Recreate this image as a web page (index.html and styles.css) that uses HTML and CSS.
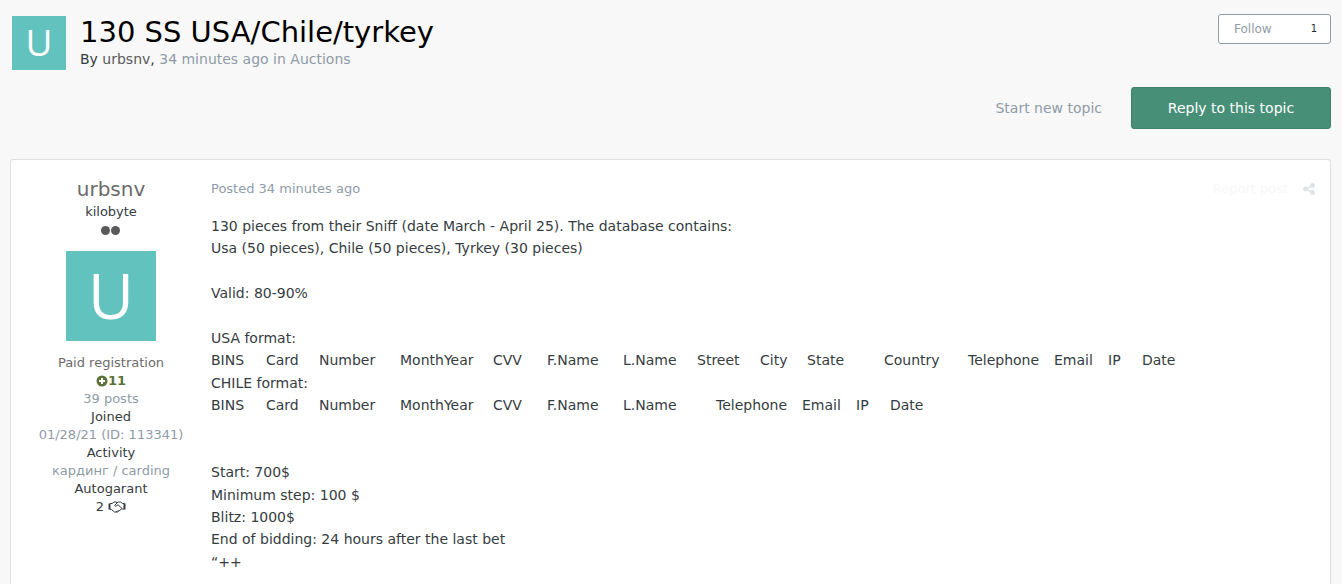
FILE: index.html
```
<!DOCTYPE html>
<html lang="en">
<head>
    <meta charset="utf-8">
    <title>130 SS USA/Chile/tyrkey</title>
    <link rel="stylesheet" href="styles.css">
</head>
<body>
    <header class="topic-header">
        <a class="avatar avatar-small" href="#">U</a>
        <div class="topic-info">
            <h1>130 SS USA/Chile/tyrkey</h1>
            <p>By <a class="dark" href="#">urbsnv</a>, <span class="light">34 minutes ago in <a href="#">Auctions</a></span></p>
        </div>
        <div class="follow">
            <a href="#">Follow</a>
            <a class="follow-count" href="#">1</a>
        </div>
    </header>

    <div class="toolbar">
        <a class="new-topic" href="#">Start new topic</a>
        <button class="reply" type="button">Reply to this topic</button>
    </div>

    <article class="post">
        <aside class="author">
            <h3><a class="name" href="#">urbsnv</a></h3>
            <ul>
                <li>kilobyte</li>
                <li class="pips"><span></span><span></span></li>
                <li class="photo"><a class="avatar avatar-large" href="#">U</a></li>
                <li class="group">Paid registration</li>
                <li class="reputation">
                    <svg width="12" height="12" viewBox="0 0 12 12"><circle cx="6" cy="6" r="5.5" fill="#5a7338"/><path d="M6 3v6M3 6h6" stroke="#fff" stroke-width="2"/></svg>11
                </li>
                <li class="light">39 posts</li>
                <li>Joined</li>
                <li class="light">01/28/21 (ID: 113341)</li>
                <li>Activity</li>
                <li class="light">кардинг / carding</li>
                <li>Autogarant</li>
                <li>2
                    <svg width="18" height="12" viewBox="0 0 18 12" fill="none" stroke="#353c41">
                        <path d="M1.500 2.500v6M16.500 2.500v6" stroke-width="2"/>
                        <path d="M2 2.500h2l2-1.500h2l1 .7L10.500 1h2l2 1.500h2M2 8.500h1.500l3 2.500h3l4-3h2.500M9 2L6.500 4.500q1 1.500 2.500 0l1-.8 4 3.800M8 11l1.500-1M10 10.500l1.500-1.500"/>
                    </svg>
                </li>
            </ul>
        </aside>

        <div class="content">
            <div class="meta">
                <a href="#">Posted 34 minutes ago</a>
                <div class="controls">
                    <a class="report" href="#">Report post</a>
                    <a href="#" aria-label="Share">
                        <svg width="12" height="12" viewBox="0 0 12 12" fill="#dfe2e5" stroke="#dfe2e5"><path d="M9.500 2.500L2.500 6l7 3.500" fill="none" stroke-width="1.500"/><circle cx="9.500" cy="2.500" r="2"/><circle cx="2.500" cy="6" r="2"/><circle cx="9.500" cy="9.500" r="2"/></svg>
                    </a>
                </div>
            </div>
            <div class="text">
                <p>130 pieces from their Sniff (date March - April 25). The database contains:<br>
                Usa (50 pieces), Chile (50 pieces), Tyrkey (30 pieces)</p>
                <p>Valid: 80-90%</p>
                <div>USA format:</div>
                <div class="fields fields-usa">
                    <span>BINS</span><span>Card</span><span>Number</span><span>MonthYear</span><span>CVV</span>
                    <span>F.Name</span><span>L.Name</span><span>Street</span><span>City</span><span>State</span>
                    <span>Country</span><span>Telephone</span><span>Email</span><span>IP</span><span>Date</span>
                </div>
                <div>CHILE format:</div>
                <div class="fields fields-chile">
                    <span>BINS</span><span>Card</span><span>Number</span><span>MonthYear</span><span>CVV</span>
                    <span>F.Name</span><span>L.Name</span><span>Telephone</span><span>Email</span><span>IP</span><span>Date</span>
                </div>
                <p class="terms">Start: 700$<br>
                Minimum step: 100 $<br>
                Blitz: 1000$<br>
                End of bidding: 24 hours after the last bet<br>
                “++</p>
            </div>
        </div>
    </article>
</body>
</html>
```
FILE: styles.css
```
* {
    box-sizing: border-box;
}
body {
    display: flex;
    flex-direction: column;
    margin: 0;
    padding: 14px 11px 0 10px;
    min-height: 100vh;
    background: #f8f8f8;
    color: #353c41;
    font-family: Verdana, "DejaVu Sans", sans-serif;
    font-size: 14px;
    line-height: 18px;
}
h1, h3, p, ul {
    margin: 0;
    padding: 0;
    font-weight: normal;
}
ul {
    list-style: none;
}
a {
    color: inherit;
    text-decoration: none;
}
svg {
    vertical-align: -2px;
}
.light {
    color: #8f9ba7;
}
.dark {
    color: #5a5a5a;
}

/* header */
.topic-header {
    display: flex;
    align-items: flex-start;
}
.avatar {
    display: flex;
    align-items: center;
    justify-content: center;
    padding-bottom: 2px;
    background: #62c2bd;
    color: #fff;
    font-family: "Open Sans", sans-serif;
}
.avatar-small {
    width: 54px;
    height: 54px;
    margin: 2px 14px 0 2px;
    font-size: 37px;
}
.avatar-large {
    width: 90px;
    height: 90px;
    font-size: 63px;
}
.topic-info {
    flex: 1;
}
.topic-info h1 {
    color: #000;
    font-size: 29px;
    line-height: 36px;
}
.follow {
    display: flex;
    justify-content: space-between;
    align-items: center;
    width: 113px;
    height: 30px;
    padding: 0 13px 0 15px;
    border: 1px solid #8f9ba7;
    border-radius: 3px;
    background: #fff;
    color: #8f9ba7;
    font-size: 12px;
}
.follow-count {
    color: #272a34;
    font-size: 10px;
}

.toolbar {
    display: flex;
    justify-content: flex-end;
    align-items: center;
    gap: 29px;
    margin: 17px 0 30px;
}
.new-topic {
    color: #8f9ba7;
}
.reply {
    width: 200px;
    height: 42px;
    border: 1px solid #3d8069;
    border-radius: 3px;
    background: #488f78;
    color: #fff;
    font: inherit;
}

/* post */
.post {
    display: flex;
    flex: 1;
    border: 1px solid #e0e0e0;
    border-bottom: 0;
    border-radius: 3px 3px 0 0;
    background: #fff;
}
.author {
    width: 200px;
    padding-top: 15px;
    font-size: 13px;
    text-align: center;
}
.author h3 {
    font-size: 20px;
    line-height: 28px;
}
.name, .group {
    color: #6b6b6b;
}
.pips {
    display: flex;
    justify-content: center;
    gap: 1px;
    padding: 5px 2px 5px 0;
}
.pips span {
    width: 9px;
    height: 9px;
    border-radius: 50%;
    background: #5a5a5a;
}
.photo {
    display: flex;
    justify-content: center;
    padding: 11px 0 13px;
}
.reputation {
    color: #5a7338;
    font-weight: bold;
}
.content {
    flex: 1;
}
.meta {
    display: flex;
    justify-content: space-between;
    padding: 20px 15px 0 0;
    color: #8f9ba7;
    font-size: 13px;
}
.controls {
    display: flex;
    gap: 15px;
}
.report {
    color: #f7f8f9;
}
.text {
    padding-top: 17px;
    line-height: 1.6;
}
.text p {
    margin-bottom: 1.6em;
}
.text .terms {
    margin: 3.2em 0 0;
}
.fields {
    display: grid;
    white-space: nowrap;
}
.fields-usa {
    grid-template-columns: 55px 53px 81px 93px 54px 76px 74px 63px 47px 77px 84px 86px 54px 34px auto;
}
.fields-chile {
    grid-template-columns: 55px 53px 81px 93px 54px 76px 93px 86px 54px 34px auto;
}
```
